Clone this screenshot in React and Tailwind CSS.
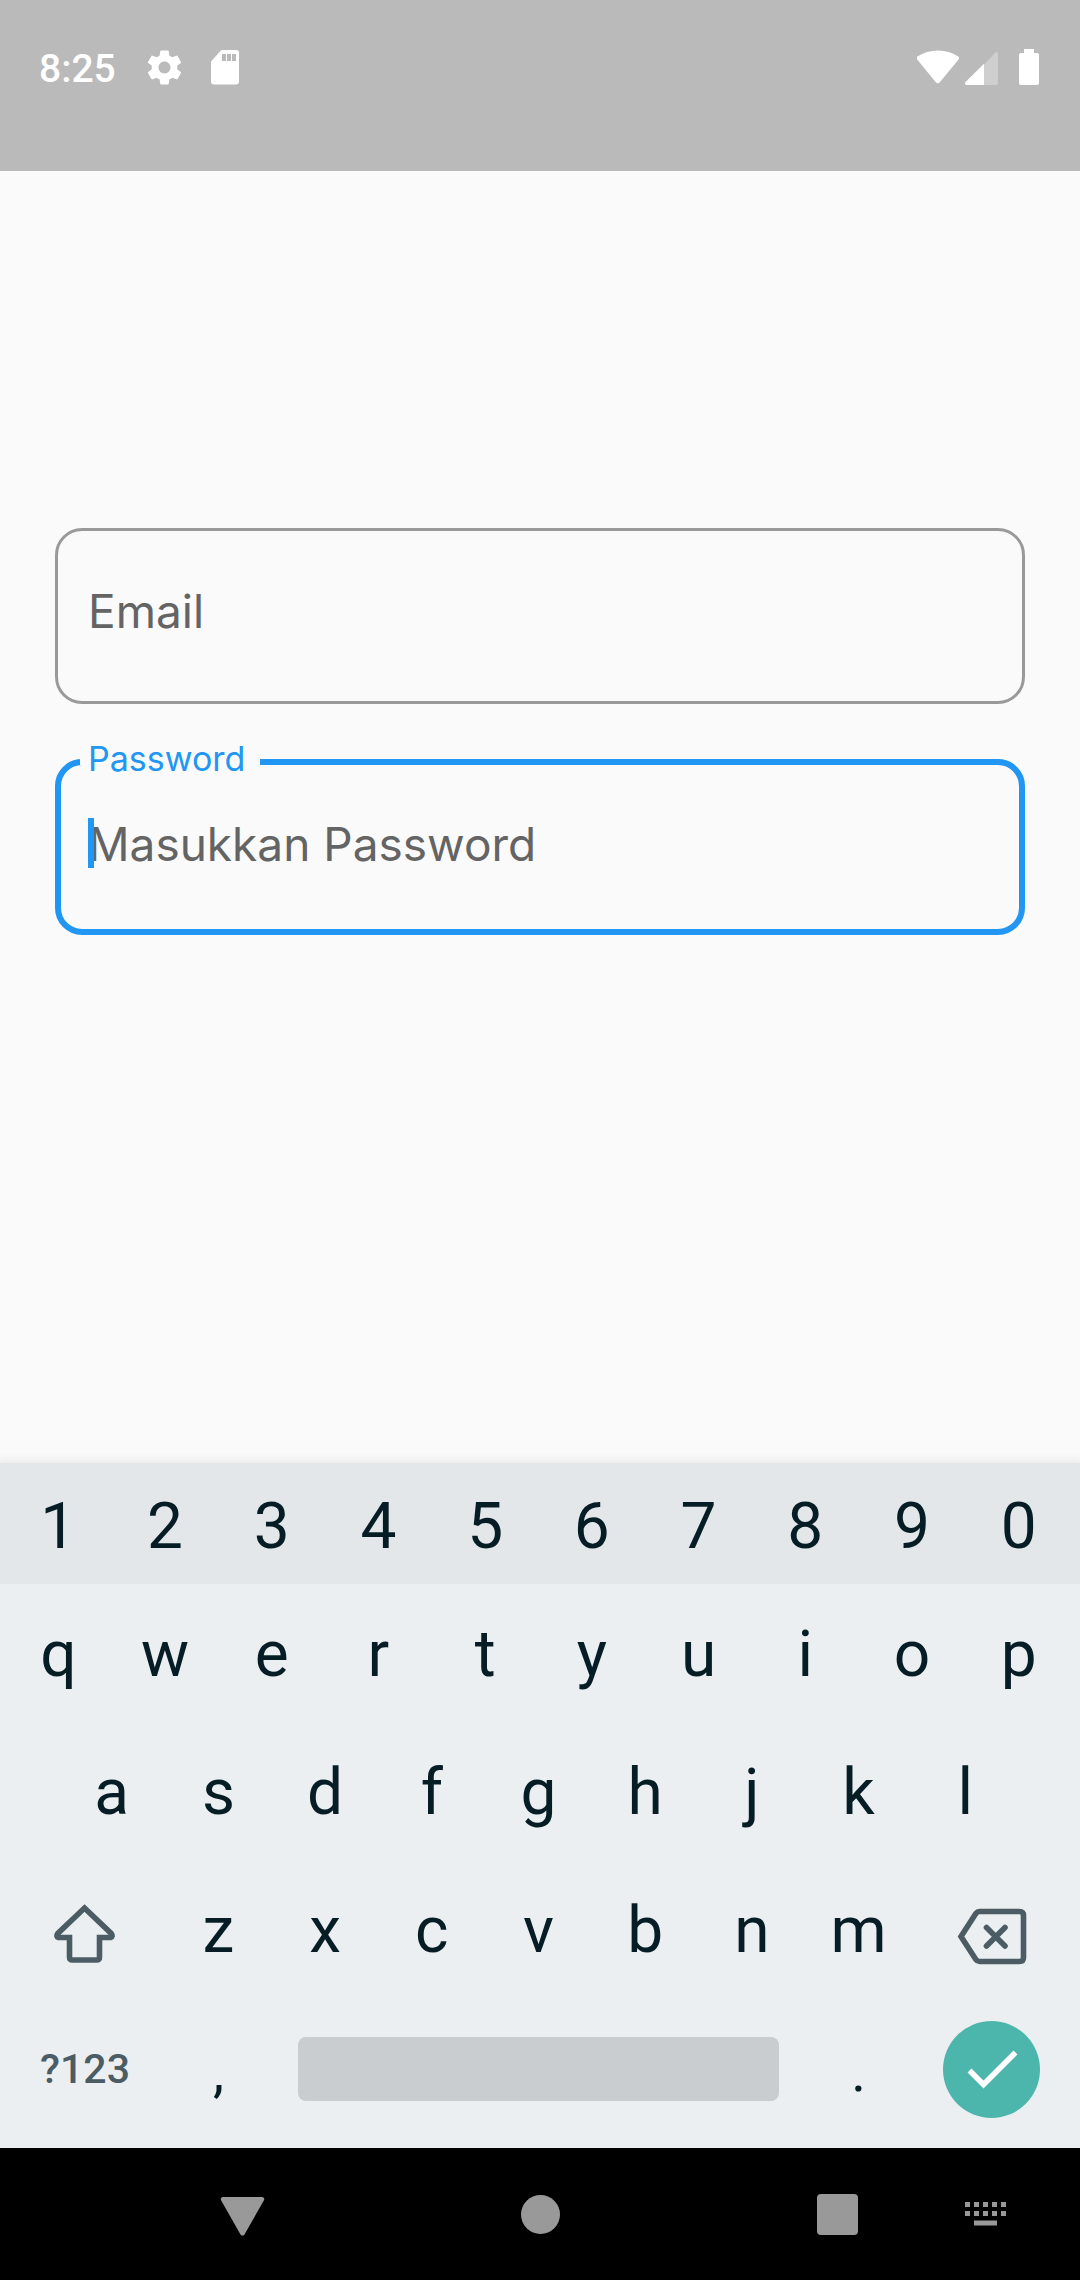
import React from "react";

const NUMBERS = "1234567890".split("");
const TOP = "qwertyuiop".split("");
const HOME = "asdfghjkl".split("");
const BOTTOM = "zxcvbnm".split("");

function StatusBar() {
  return (
    <header className="h-[171px] bg-[#bababa] text-white">
      <div className="flex h-[134px] items-center justify-between px-[39px]">
        <div className="flex items-center">
          <span className="pt-1 text-[39px] font-medium leading-none">8:25</span>
          <svg className="ml-7 size-[41px]" viewBox="0 0 24 24" fill="currentColor">
            <path d="M19.43 12.98c.04-.32.07-.64.07-.98s-.03-.66-.07-.98l2.11-1.65c.19-.15.24-.42.12-.64l-2-3.46c-.12-.22-.39-.3-.61-.22l-2.49 1c-.52-.4-1.08-.73-1.69-.98l-.38-2.65C14.46 2.18 14.25 2 14 2h-4c-.25 0-.46.18-.49.42l-.38 2.65c-.61.25-1.17.59-1.69.98l-2.49-1c-.23-.09-.49 0-.61.22l-2 3.46c-.13.22-.07.49.12.64l2.11 1.65c-.04.32-.07.65-.07.98s.03.66.07.98l-2.11 1.65c-.19.15-.24.42-.12.64l2 3.46c.12.22.39.3.61.22l2.49-1c.52.4 1.08.73 1.69.98l.38 2.65c.03.24.24.42.49.42h4c.25 0 .46-.18.49-.42l.38-2.65c.61-.25 1.17-.59 1.69-.98l2.49 1c.23.09.49 0 .61-.22l2-3.46c.12-.22.07-.49-.12-.64l-2.11-1.65zM12 15.5c-1.93 0-3.5-1.57-3.5-3.5s1.57-3.5 3.5-3.5 3.5 1.57 3.5 3.5-1.57 3.5-3.5 3.5z" />
          </svg>
          <svg className="ml-[19px] size-[42px]" viewBox="0 0 42 42" fill="currentColor">
            <path
              fillRule="evenodd"
              d="M18.500 4H32a3 3 0 0 1 3 3v28.500a3 3 0 0 1-3 3H10a3 3 0 0 1-3-3V16.500a3 3 0 0 1 .9-2.100L16.400 4.900A3 3 0 0 1 18.500 4zM18 8v7h4V8zM23 8v7h4V8zM28 8v7h4V8z"
            />
          </svg>
        </div>
        <svg className="h-[42px] w-[124px]" viewBox="917 46 124 42" fill="currentColor">
          <path d="M917.500 56.500C929 48.500 947 48.500 958.300 56.500Q959.600 57.800 958.600 59.400L939.800 82.200Q937.800 84.200 935.800 82.200L917.200 59.400Q916.200 57.800 917.500 56.500z" />
          <path opacity="0.3" d="M984 64.500l11.200-11.800c1.200-1.200 2.800-.6 2.800 1V83a2 2 0 0 1-2 2h-12z" />
          <path d="M984 63.800V85h-17.300c-1.800 0-2.400-1.800-1.200-3z" />
          <path d="M1024 53v-4h10v4h3a2 2 0 0 1 2 2v28a2 2 0 0 1-2 2h-16a2 2 0 0 1-2-2V55a2 2 0 0 1 2-2z" />
        </svg>
      </div>
    </header>
  );
}

function Key({ children, className = "col-span-2", ...rest }) {
  return (
    <button type="button" className={"flex items-center justify-center " + className} {...rest}>
      {children}
    </button>
  );
}

function Keyboard() {
  return (
    <section
      aria-label="Keyboard"
      className="bg-[#ebeff2] pb-[10px] text-[64px] leading-none text-[#061d26] shadow-[0_4px_10px_5px_rgba(0,0,0,0.09)]"
    >
      <div className="mb-[2px] grid h-[121px] grid-cols-20 bg-[#e3e7ea] pl-[5px] pr-2 pt-[6px]">
        {NUMBERS.map((k) => (
          <Key key={k}>{k}</Key>
        ))}
      </div>
      <div className="grid h-[138px] grid-cols-20 pl-[5px] pr-2">
        {TOP.map((k) => (
          <Key key={k}>{k}</Key>
        ))}
      </div>
      <div className="grid h-[138px] grid-cols-20 pl-[5px] pr-2">
        <span />
        {HOME.map((k) => (
          <Key key={k}>{k}</Key>
        ))}
      </div>
      <div className="grid h-[138px] grid-cols-20 pl-[5px] pr-2">
        <Key className="col-span-3 text-[#4b5c64]" aria-label="Shift">
          <svg
            className="size-[72px]"
            viewBox="1 1 72 72"
            fill="none"
            stroke="currentColor"
            strokeWidth="5.600"
          >
            <path d="M36.500 14L63.200 39.500Q65.500 42.500 62.500 43.500H51.500V63Q51.500 66 48.500 66H24.500Q21.500 66 21.500 63V43.500H10.500Q7.500 42.500 9.800 39.500z" />
          </svg>
        </Key>
        {BOTTOM.map((k) => (
          <Key key={k}>{k}</Key>
        ))}
        <Key className="col-span-3 text-[#4b5c64]" aria-label="Backspace">
          <svg
            className="size-[76px]"
            viewBox="-1 2 76 76"
            fill="none"
            stroke="currentColor"
            strokeWidth="5.600"
          >
            <path d="M6 45.500L21 22.300Q22.300 20.500 24.500 20.500H64.500Q68.500 20.500 68.500 24.500V66.500Q68.500 70.500 64.500 70.500H24.500Q22.300 70.500 21 68.700z" />
            <path strokeLinecap="round" d="M31.500 36.500l18.500 18.500M50 36.500L31.500 55" />
          </svg>
        </Key>
      </div>
      <div className="grid h-[138px] grid-cols-20 items-center pl-[5px] pr-2">
        <Key className="col-span-3 text-[41px] font-medium text-[#4b5c64]">?123</Key>
        <Key className="col-span-2 pt-[6px] text-[56px]">,</Key>
        <Key className="col-span-10 mx-[26px] h-16 rounded-lg bg-[#c9cdd0]" aria-label="Space" />
        <Key className="col-span-2 pt-[6px] text-[56px]">.</Key>
        <div className="col-span-3 flex justify-center">
          <Key className="size-[97px] rounded-full bg-[#4db6ac] text-white" aria-label="Done">
            <svg
              className="size-[66px]"
              viewBox="0 0 66 66"
              fill="none"
              stroke="currentColor"
              strokeWidth="5.500"
            >
              <path d="M10.500 34.500L24.500 48.500L56.500 16.500" />
            </svg>
          </Key>
        </div>
      </div>
    </section>
  );
}

function NavBar() {
  return (
    <nav className="grid h-[132px] grid-cols-40 bg-black text-[#999999]">
      <Key className="col-span-4 col-start-8" aria-label="Back">
        <svg className="size-[50px]" viewBox="0 0 50 50" fill="currentColor">
          <path d="M5 8h39c2 0 2.800 2 1.800 3.600L26.500 45.400q-2 2.400-4 0L3.200 11.600C2.200 10 3 8 5 8z" />
        </svg>
      </Key>
      <Key className="col-span-4 col-start-19" aria-label="Home">
        <span className="size-[39px] rounded-full bg-current" />
      </Key>
      <Key className="col-span-4 col-start-30" aria-label="Recent apps">
        <span className="size-[41px] rounded bg-current" />
      </Key>
      <Key className="col-span-3 col-start-36" aria-label="Switch keyboard">
        <svg className="h-6 w-[41px]" viewBox="0 0 41 24" fill="currentColor">
          <path d="M0 0h5v5H0zM9 0h5v5H9zM18 0h5v5h-5zM27 0h5v5h-5zM36 0h5v5h-5zM0 9h5v5H0zM9 9h5v5H9zM18 9h5v5h-5zM27 9h5v5h-5zM36 9h5v5h-5zM9 18.500h23v5H9z" />
        </svg>
      </Key>
    </nav>
  );
}

export default function App() {
  return (
    <div className="flex min-h-screen flex-col bg-[#fafafa] font-['Roboto',sans-serif]">
      <StatusBar />
      <main className="flex-1 px-[55px] pt-[357px] font-['Inter',sans-serif]">
        <form className="flex flex-col gap-[55px]">
          <input
            type="email"
            aria-label="Email"
            placeholder="Email"
            className="h-44 w-full rounded-[27px] border-[3px] border-[#999999] bg-transparent px-[30px] pb-[10px] text-[46px] outline-none placeholder:text-[#646464]"
          />
          <fieldset className="relative h-44 min-w-0 rounded-[27px] border-[6px] border-[#2196f3]">
            <legend className="ml-[19px] h-[6px] w-[180px] px-[8px] text-[34px] leading-[0px] text-[#2196f3]">
              <label htmlFor="password">Password</label>
            </legend>
            <input
              id="password"
              type="password"
              placeholder="Masukkan Password"
              className="h-[158px] w-full bg-transparent px-[27px] text-[46px] caret-transparent outline-none placeholder:text-[#646464]"
            />
            <span className="absolute left-[27px] top-[53px] h-[50px] w-[6px] bg-[#2196f3]" />
          </fieldset>
        </form>
      </main>
      <Keyboard />
      <NavBar />
    </div>
  );
}
